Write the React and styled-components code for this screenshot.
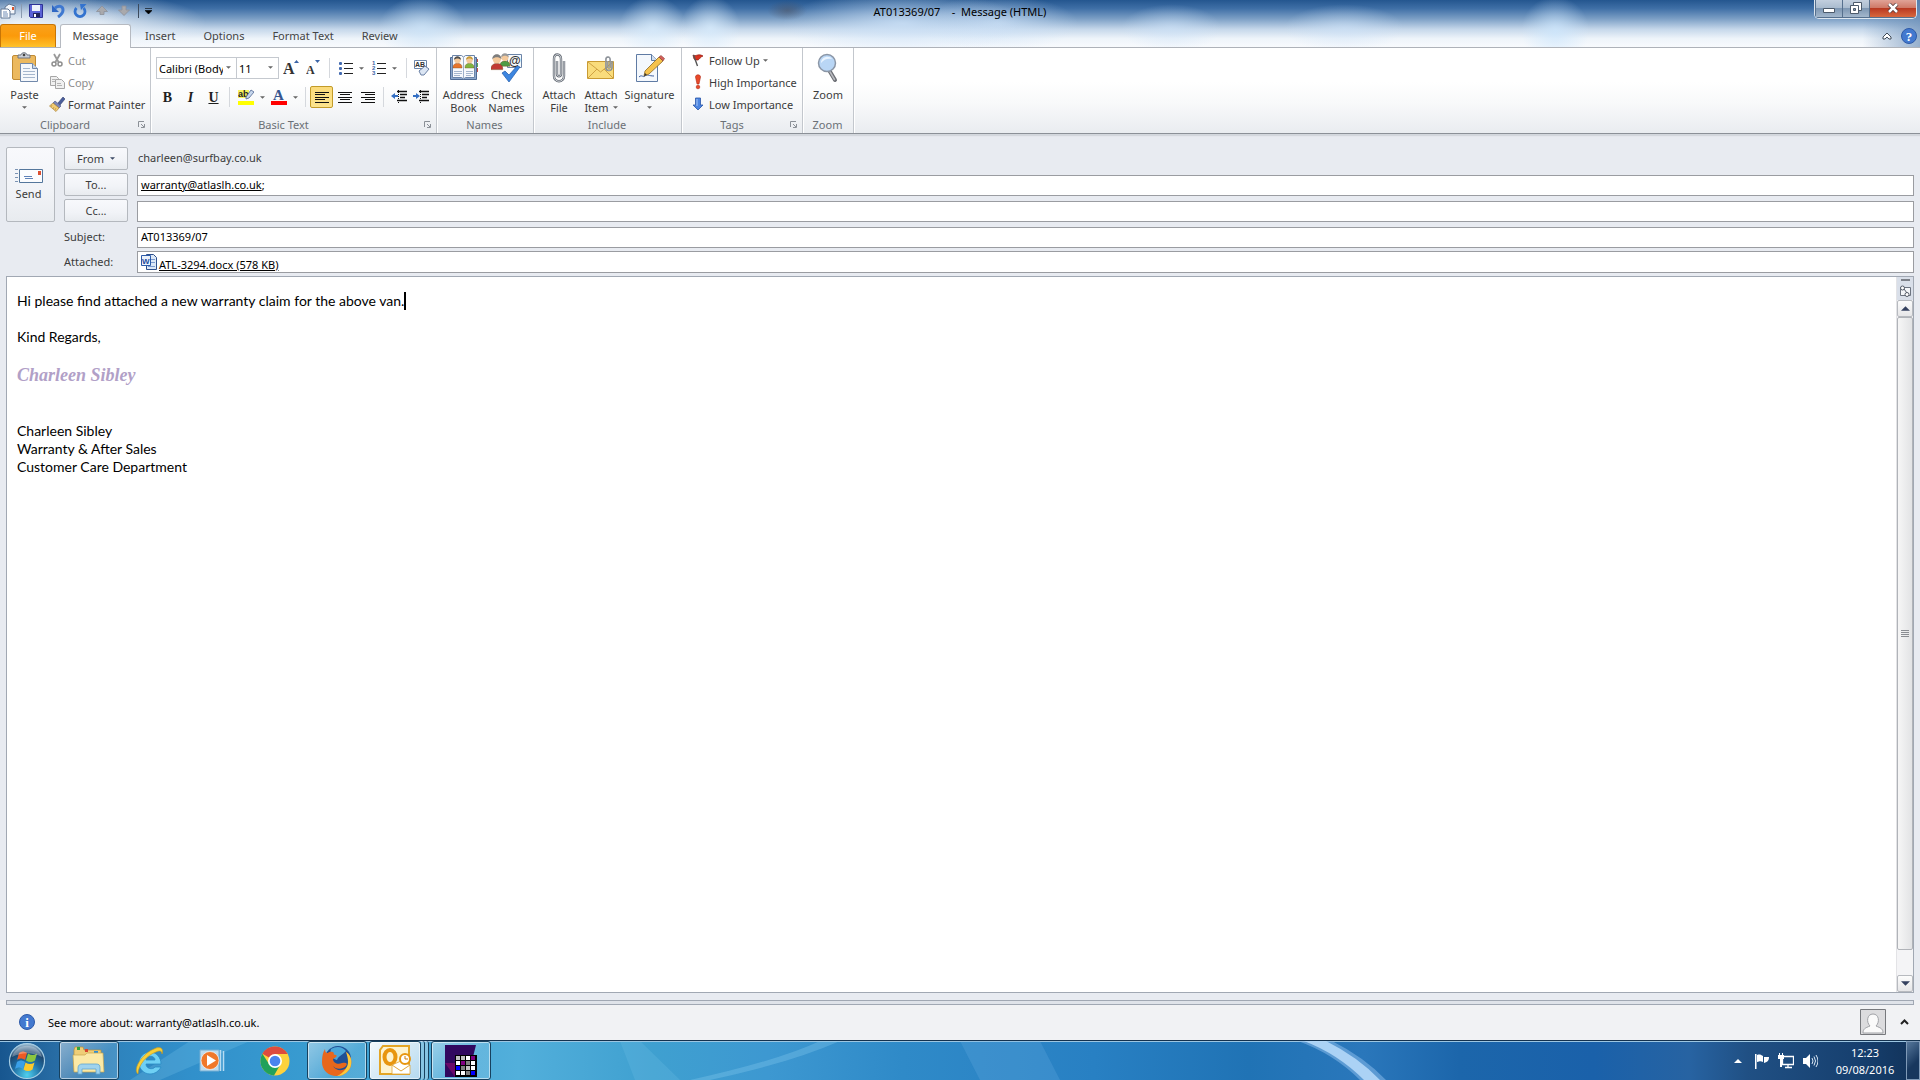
import styled, { createGlobalStyle, css } from "styled-components";

const GlobalStyle = createGlobalStyle`
    * {
        box-sizing: border-box;
    }
    body {
        margin: 0;
        font-family: "Noto Sans", "Open Sans", sans-serif;
        font-size: 11px;
        line-height: 13px;
        color: #3b3b3b;
    }
    button, input, select {
        font: inherit;
        color: inherit;
        margin: 0;
        padding: 0;
        border: none;
        background: none;
    }
    svg {
        display: block;
        flex: none;
    }
`

const Page = styled.div`
    min-height: 100vh;
    display: flex;
    flex-direction: column;
    background-color: #e8ebf1;
`

/* ---------- title bar and tabs ---------- */

const Glass = styled.header`
    height: 48px;
    display: flex;
    flex-direction: column;
    border-bottom: 1px solid #aeb2b9;
    background:
        radial-gradient(ellipse 110px 34px at 1% 50%, rgba(244, 248, 252, 0.9), transparent),
        radial-gradient(ellipse 110px 30px at 5% 50%, rgba(238, 244, 250, 0.8), transparent),
        radial-gradient(ellipse 44px 32px at 22% 60%, rgba(205, 228, 248, 0.8), transparent),
        radial-gradient(ellipse 34px 32px at 34% 60%, rgba(215, 235, 252, 0.8), transparent),
        radial-gradient(ellipse 30px 32px at 37% 60%, rgba(215, 235, 252, 0.8), transparent),
        radial-gradient(ellipse 20px 10px at 41% 22%, rgba(80, 80, 90, 0.5), transparent),
        radial-gradient(ellipse 120px 34px at 47% 50%, rgba(205, 226, 248, 0.8), transparent),
        radial-gradient(ellipse 80px 28px at 52% 50%, rgba(205, 226, 248, 0.7), transparent),
        radial-gradient(ellipse 50px 24px at 61% 60%, rgba(205, 226, 248, 0.6), transparent),
        radial-gradient(ellipse 60px 24px at 70% 60%, rgba(205, 226, 248, 0.6), transparent),
        radial-gradient(ellipse 34px 34px at 81% 65%, rgba(205, 230, 252, 0.8), transparent),
        linear-gradient(to right, transparent 97%, rgba(110, 145, 185, 0.7) 100%),
        linear-gradient(to bottom, #24568f 0%, #3f6fa6 18%, #7c9fc5 40%, #c5d7ea 62%, #eef4fa 82%, #f8fafd 100%);
`
const TitleBar = styled.div`
    height: 24px;
    display: grid;
    grid-template-columns: 1fr auto 1fr;
    align-items: start;
`
const QuickAccess = styled.div`
    display: flex;
    align-items: center;
    gap: 6px;
    height: 22px;
    padding-left: 1px;
`
const ToolButton = styled.button`
    display: flex;
    align-items: center;
    justify-content: center;
    width: ${props => props.$width || 16}px;
    height: 20px;
`
const QuickSeparator = styled.span`
    width: 1px;
    height: 14px;
    background-color: ${props => props.$dark ? "#3c4a5c" : "#8a9bb0"};
`
const Title = styled.h1`
    margin: 0;
    padding-top: 5px;
    font-size: 11px;
    font-weight: 400;
    color: #000;
    white-space: pre;
`
const WindowButtons = styled.div`
    justify-self: end;
    display: flex;
    height: 19px;
    margin-right: 3px;
    border: 1px solid #dde6ef;
    border-top: none;
    border-radius: 0 0 5px 5px;
    overflow: hidden;
`
const WindowButton = styled.button`
    width: ${props => props.$close ? 47 : 27}px;
    display: flex;
    align-items: center;
    justify-content: center;
    padding-bottom: 2px;
    border-left: 1px solid #56708e;
    border-bottom: 1px solid #56708e;
    background: ${props => props.$close
        ? "linear-gradient(#e0a397, #cf7a68 45%, #b93a22 50%, #d8683e)"
        : "linear-gradient(#c2cfde, #aabccf 45%, #7e97b3 50%, #a3b7cc)"};
`
const Tabs = styled.nav`
    flex: 1;
    display: flex;
    align-items: stretch;
`
const tabBase = css`
    height: 23px;
    padding-bottom: 1px;
    color: #444;
`
const FileTab = styled.button`
    ${tabBase}
    width: 56px;
    margin-right: 4px;
    color: #fff;
    border: 1px solid #c77506;
    border-bottom: none;
    border-radius: 3px 3px 0 0;
    background: linear-gradient(#f9a11c, #fb9a0a 50%, #fec22c);
`
const Tab = styled.button`
    ${tabBase}
    padding-left: 14px;
    padding-right: 14px;
`
const ActiveTab = styled(Tab)`
    width: 71px;
    height: 24px;
    padding: 0 0 2px;
    border: 1px solid #b6bac1;
    border-bottom: none;
    border-radius: 3px 3px 0 0;
    background-color: #fff;
    margin-bottom: -1px;
    z-index: 1;
`
const HelpArea = styled.div`
    margin-left: auto;
    display: flex;
    align-items: center;
    gap: 6px;
    padding-right: 3px;
`

/* ---------- ribbon ---------- */

const Ribbon = styled.section`
    display: flex;
    height: 86px;
    border-bottom: 1px solid #8b9097;
    box-shadow: 0 2px 1px #d3d7dd;
    background: linear-gradient(#fff 40%, #f8f9fa 65%, #e9ecf0);
`
const Group = styled.div`
    width: ${props => props.$width}px;
    display: flex;
    flex-direction: column;
    border-right: 1px solid #c3c7cd;
    box-shadow: 1px 0 0 #fff;
`
const GroupBody = styled.div`
    flex: 1;
    display: flex;
    padding: 0 ${props => props.$pad || 0}px;
`
const GroupFooter = styled.div`
    display: flex;
    align-items: center;
    gap: 12px;
    height: 17px;
    padding: 0 5px 1px 4px;
    color: #6b7076;
`
const GroupName = styled.span`
    flex: 1;
    text-align: center;
`
const BigButton = styled.button`
    width: ${props => props.$width}px;
    display: flex;
    flex-direction: column;
    align-items: center;
    padding-top: 4px;
    white-space: nowrap;
    > svg {
        height: 32px;
    }
`
const BigLabel = styled.span`
    margin-top: 4px;
    line-height: 13px;
`
const LabelLine = styled.span`
    display: flex;
    align-items: center;
    justify-content: center;
    gap: 4px;
    height: 13px;
`
const SmallStack = styled.div`
    display: flex;
    flex-direction: column;
    padding-top: 1px;
`
const SmallButton = styled.button`
    display: flex;
    align-items: center;
    gap: 3px;
    height: 22px;
    white-space: nowrap;
    color: ${props => props.$off ? "#8d8d8d" : "#3b3b3b"};
`
const FormatRows = styled.div`
    flex: 1;
    display: flex;
    flex-direction: column;
    gap: 7px;
    padding-top: 9px;
`
const FormatRow = styled.div`
    display: flex;
    align-items: center;
    height: 22px;
`
const SelectBox = styled.span`
    position: relative;
    width: ${props => props.$width}px;
    height: 22px;
    margin-right: -1px;
    border: 1px solid #c5c9cf;
    background-color: #fff;
    svg {
        position: absolute;
        right: 5px;
        top: 8px;
        pointer-events: none;
    }
`
const Select = styled.select`
    appearance: none;
    width: 100%;
    height: 20px;
    padding: 0 13px 0 2px;
    color: #000;
`
const Divider = styled.span`
    width: 1px;
    height: 20px;
    margin: 0 ${props => props.$gap || 5}px;
    background-color: #d5d8dd;
`
const FormatButton = styled.button`
    width: ${props => props.$width || 23}px;
    height: 22px;
    display: flex;
    align-items: center;
    justify-content: center;
    gap: 6px;
    font-family: "Liberation Serif", serif;
    font-size: 14px;
    font-weight: 700;
    color: #1e1e1e;
    font-style: ${props => props.$italic ? "italic" : "normal"};
    text-decoration: ${props => props.$underline ? "underline" : "none"};
    ${props => props.$pressed && css`
        border: 1px solid #c29b29;
        border-radius: 2px;
        background: linear-gradient(#fbdb7a, #fce48e);
    `}
`

/* ---------- address fields ---------- */

const Envelope = styled.form`
    display: grid;
    grid-template-columns: 49px 64px 1fr;
    grid-template-rows: repeat(4, 23px) 22px;
    column-gap: 9px;
    row-gap: 3px;
    padding: 13px 6px 3px;
`
const plate = css`
    border: 1px solid #b4b8be;
    border-radius: 2px;
    background: linear-gradient(#f8f9fc, #f1f3f7 60%, #e8ebef);
`
const SendButton = styled.button`
    ${plate}
    grid-row: 1 / span 3;
    display: flex;
    flex-direction: column;
    align-items: center;
    justify-content: center;
    gap: 3px;
    padding-right: 4px;
`
const FieldButton = styled.button`
    ${plate}
    display: flex;
    align-items: center;
    justify-content: center;
    gap: 6px;
`
const FieldLabel = styled.label`
    grid-column: 2;
    align-self: center;
    padding-bottom: 1px;
`
const FromValue = styled.output`
    align-self: center;
    padding: 0 1px 2px;
`
const fieldBox = css`
    height: 21px;
    align-self: end;
    padding: 0 3px 2px;
    border: 1px solid #9a9ca1;
    background-color: #fff;
    color: #000;
`
const FieldInput = styled.input`
    ${fieldBox}
    width: 100%;
`
const FieldBox = styled.div`
    ${fieldBox}
    display: flex;
    align-items: center;
    a {
        color: #000;
    }
    input {
        flex: 1;
    }
`
const AttachBox = styled(FieldBox)`
    height: 22px;
    padding-bottom: 0;
    gap: 2px;
    a {
        padding-top: 4px;
    }
`

/* ---------- message ---------- */

const Message = styled.main`
    flex: 1;
    display: flex;
    margin: 0 6px;
    border: 1px solid #a1a8b3;
    background-color: #fff;
`
const Letter = styled.div`
    flex: 1;
    padding: 15px 10px;
    outline: none;
    font-family: Lato, sans-serif;
    font-size: 14px;
    line-height: 18px;
    color: #000;
    p {
        margin: 0 0 18px;
    }
`
const Caret = styled.span`
    display: inline-block;
    width: 2px;
    height: 18px;
    vertical-align: top;
    background-color: #000;
`
const Signature = styled.p`
    padding: 2px 0 20px;
    font-family: "Liberation Serif", serif;
    font-size: 18px;
    font-style: italic;
    font-weight: 700;
    color: #b1a0c7;
`
const ScrollBar = styled.div`
    width: 17px;
    display: flex;
    flex-direction: column;
    border-left: 1px solid #e3e3e6;
    background-color: #f4f4f6;
`
const ScrollTools = styled.div`
    height: 23px;
    display: flex;
    flex-direction: column;
    align-items: center;
    gap: 4px;
    padding-top: 2px;
    background-color: #d9dfe9;
`
const ScrollButton = styled.button`
    height: 17px;
    display: flex;
    align-items: center;
    justify-content: center;
    border: 1px solid #b7babf;
    border-radius: 2px;
    background: linear-gradient(#fcfcfc, #e6e6e8);
`
const ScrollTrack = styled.div`
    flex: 1;
    display: flex;
    padding-bottom: 25px;
`
const ScrollThumb = styled.div`
    flex: 1;
    display: flex;
    align-items: center;
    justify-content: center;
    border: 1px solid #b0b3b8;
    border-radius: 2px;
    background: linear-gradient(to right, #f6f6f6, #e2e3e5);
`

/* ---------- people pane ---------- */

const People = styled.footer`
    margin-top: 7px;
    height: 40px;
    display: flex;
    flex-direction: column;
    background-color: #f1f2f4;
`
const Splitter = styled.div`
    height: 5px;
    margin: 0 6px;
    border: 1px solid #a1a8b3;
    background-color: #dfe3e9;
`
const PeopleRow = styled.div`
    flex: 1;
    display: flex;
    align-items: center;
    gap: 13px;
    padding: 0 10px 1px 19px;
    color: #000;
`
const PeopleEnd = styled.div`
    margin-left: auto;
    display: flex;
    align-items: center;
    gap: 12px;
`

/* ---------- taskbar ---------- */

const Taskbar = styled.div`
    position: relative;
    height: 40px;
    display: flex;
    overflow: hidden;
    border-top: 1px solid #14324f;
    box-shadow: inset 0 1px 0 #9cc6e2;
    background: linear-gradient(to right, #17568f 0, #286da5 3%, #2e83bd 6%, #3190cb 10%, #3b9fd2 18%, #52afdb 27%,
        #3fa0d0 34%, #3d98d1 40%, #2f8ac8 47%, #2880c3 57%, #2073b5 65%, #2a77bb 71%, #1c66ab 76%, #1a61aa 83%,
        #2763a2 88%, #205084 91%, #163f6e 97%, #123258 100%);
`
const Streaks = styled.svg`
    position: absolute;
    left: 0;
    top: 0;
    width: 100%;
    height: 100%;
`
const TaskButton = styled.button`
    position: relative;
    width: ${props => props.$width}px;
    height: 39px;
    display: flex;
    align-items: center;
    justify-content: center;
    margin-right: ${props => props.$after || 0}px;
    ${props => props.$open && css`
        border: 1px solid #17415f;
        border-radius: 3px;
        box-shadow: inset 0 0 0 1px rgba(255, 255, 255, 0.55);
        background: linear-gradient(135deg, rgba(255, 255, 255, 0.45), rgba(255, 255, 255, 0.12) 60%);
    `}
    ${props => props.$active && css`
        background: linear-gradient(135deg, #f4f9fc, #b4d9ef);
    `}
`
const StackEdge = styled.span`
    position: relative;
    width: 4px;
    height: 39px;
    border-right: 1px solid #17415f;
    border-radius: 0 3px 3px 0;
    background-color: rgba(255, 255, 255, 0.35);
    margin-right: ${props => props.$after || 0}px;
`
const Tray = styled.div`
    position: relative;
    margin-left: auto;
    display: flex;
    align-items: center;
    gap: 8px;
    color: #fff;
`
const Clock = styled.time`
    width: 66px;
    margin-left: 6px;
    text-align: center;
    line-height: 17px;
`
const ShowDesktop = styled.button`
    width: 14px;
    height: 39px;
    border: 1px solid #7f9ab8;
    background: linear-gradient(135deg, #56779b, #17375e 60%);
`

/* ---------- icons ---------- */

const Icon = ({ w = 16, h = w, box, children }) => (
    <svg width={w} height={h} viewBox={box || `0 0 ${w} ${h}`} aria-hidden="true">{children}</svg>
)

const Arrow = ({ color = "#666", w = 5, up }) => (
    <Icon w={w} h={Math.ceil(w / 2)} box="0 0 6 3"><path d={up ? "M0 3h6L3 0z" : "M0 0h6L3 3z"} fill={color} /></Icon>
)

const Launcher = () => (
    <Icon w={7}>
        <path d="M.5 6V.5H6" fill="none" stroke="#8b9097" />
        <path d="M3 3l3 3M6.500 3v3.500H3" fill="none" stroke="#8b9097" />
    </Icon>
)

const MailIcon = () => (
    <Icon w={16}>
        <path d="M5 4l4-3 6 2v8H5z" fill="#f4f7fb" stroke="#607694" />
        <path d="M1 6h7l2 2v7H1z" fill="#fff" stroke="#607694" />
        <path d="M3 9h4M3 11h5M3 13h5" stroke="#6e8bb4" />
        <path d="M12 4h2v3h-2z" fill="#d8542c" />
    </Icon>
)

const SaveIcon = () => (
    <Icon w={14}>
        <path d="M.5.5h13v13h-12l-1-1z" fill="#5a62d6" stroke="#2d3295" />
        <path d="M3 1h8v6H3z" fill="#eef2fb" />
        <path d="M4 9h7v4H4z" fill="#20255e" />
        <path d="M5 10h2v3H5z" fill="#fff" />
    </Icon>
)

const UndoIcon = () => (
    <Icon w={14}>
        <path d="M4 4c4-3 8-2 8 2 0 3-2 5-5 7" fill="none" stroke="#3f78d0" strokeWidth="3" />
        <path d="M1 1v7h7z" fill="#2f67c4" />
    </Icon>
)

const RedoIcon = () => (
    <Icon w={14}>
        <path d="M3.500 4a5 5 0 1 0 7 0" fill="none" stroke="#3373cf" strokeWidth="2.800" />
        <path d="M7 0h6.500L8 6z" fill="#3373cf" />
    </Icon>
)

const StepIcon = ({ down }) => (
    <Icon w={12}>
        <path d={down ? "M4 1h4v4h3.500L6 10.500.5 5H4z" : "M6 1l5.500 5.500H8v3H4v-3H.5z"} fill="#a9a9ac" stroke="#8d9199" strokeWidth=".8" />
    </Icon>
)

const PasteIcon = () => (
    <Icon w={28} h={32}>
        <rect x="1.500" y="3.500" width="23" height="24" rx="1.500" fill="#ecb95f" stroke="#c08b35" />
        <path d="M7 6V3h3c0-3 6-3 6 0h3v3z" fill="#c9ced6" stroke="#6e7580" />
        <circle cx="13" cy="3" r="1.300" fill="#444" />
        <path d="M9.500 11.500h12l5 5v13h-17z" fill="#f5f8fc" stroke="#7189ab" />
        <path d="M21.500 11.500v5h5" fill="#cad7e8" stroke="#7189ab" />
        <path d="M12 16.500h7M12 19.500h12M12 22.500h12M12 25.500h12" stroke="#a5b6cd" />
    </Icon>
)

const CutIcon = () => (
    <Icon w={16}>
        <path d="M5 2l4.500 8M11 2L6.500 10" stroke="#9a9a9a" strokeWidth="1.800" />
        <circle cx="5" cy="12" r="2" fill="none" stroke="#8e8e8e" strokeWidth="1.500" />
        <circle cx="11" cy="12" r="2" fill="none" stroke="#8e8e8e" strokeWidth="1.500" />
    </Icon>
)

const CopyIcon = () => (
    <Icon w={16}>
        <path d="M1.500 2.500h6l2 2v7h-8z" fill="#f0f0f0" stroke="#a6a6a6" />
        <path d="M6.500 5.500h6l3 3v6h-9z" fill="#f0f0f0" stroke="#a6a6a6" />
        <path d="M3 5.500h3M3 7.500h3M8 9.500h4M8 11.500h5" stroke="#b4b4b4" />
    </Icon>
)

const PainterIcon = () => (
    <Icon w={16}>
        <path d="M9 7l5-6 2 2-5 6z" fill="#4b5f9c" stroke="#2f3c6b" strokeWidth=".6" />
        <path d="M6 5l6 5-2 2-6-5z" fill="#7a86b8" stroke="#454f80" strokeWidth=".6" />
        <path d="M4 7l6 5-3 3.500L.5 10z" fill="#f2cd74" stroke="#a9823a" strokeWidth=".7" />
        <path d="M3 9l-1 2M5 11l-1 2M7 12l-1 2" stroke="#b98f3c" strokeWidth=".7" />
    </Icon>
)

const SizeIcon = ({ big }) => (
    <Icon w={16}>
        <text x="0" y="14" fontFamily="Liberation Serif, serif" fontWeight="700" fontSize={big ? 16 : 12} fill="#333">A</text>
        <path d={big ? "M11 3h5l-2.500-3z" : "M9 0h5l-2.500 3z"} fill="#3b64a6" />
    </Icon>
)

const ListIcon = ({ numbers }) => (
    <Icon w={14} h={14}>
        {[1, 6, 11].map((y, i) => numbers
            ? <text key={y} x="0" y={y + 3} fontSize="6" fontWeight="700" fill="#3b64a6" fontFamily="Liberation Sans, sans-serif">{i + 1}</text>
            : <rect key={y} x="0" y={y} width="3" height="3" rx="1" fill="#4169b0" />)}
        <path d="M5 2.500h9M5 7.500h9M5 12.500h9" stroke="#222" />
    </Icon>
)

const ClearIcon = () => (
    <Icon w={18} h={16}>
        <path d="M1.500.5h12v8h-12z" fill="#fff" stroke="#6b84a8" />
        <text x="2" y="7" fontSize="7" fontWeight="700" fill="#333" fontFamily="Liberation Sans, sans-serif">AB</text>
        <path d="M6 11l6-5 4 3-5 6H8z" fill="#dbe5f3" stroke="#6a80a5" />
    </Icon>
)

const HighlightIcon = () => (
    <Icon w={16}>
        <path d="M0 1h11v8H0z" fill="#f8f35c" />
        <text x="0" y="8" fontSize="9" fontFamily="Liberation Sans, sans-serif" fill="#222">ab</text>
        <path d="M8 8l5-7 3 2-5 6-3 1z" fill="#c6d6ec" stroke="#4f6692" strokeWidth=".8" />
        <path d="M0 12h16v4H0z" fill="#ff0" />
    </Icon>
)

const FontColorIcon = () => (
    <Icon w={16}>
        <text x="2" y="11" fontSize="15" fontWeight="700" fontFamily="Liberation Serif, serif" fill="#35558f">A</text>
        <path d="M0 12h16v4H0z" fill="#f00" />
    </Icon>
)

const AlignIcon = ({ at }) => (
    <Icon w={14} h={11}>
        {[14, 10, 14, 10, 14].map((len, i) => (
            <rect key={i} x={at === "left" ? 0 : at === "right" ? 14 - len : (14 - len) / 2} y={[0, 2, 5, 7, 10][i]} width={len} height="1" fill="#111" />
        ))}
    </Icon>
)

const IndentIcon = ({ out }) => (
    <Icon w={16} h={14}>
        <path d="M6 1.500h10M9 4.500h7M9 7.500h5M6 10.500h10" stroke="#111" strokeWidth="1.300" />
        <path d="M7.500 0v14" stroke="#111" strokeDasharray="1 1" />
        <path d={out ? "M0 6l4-3v2h3v2H4v2z" : "M7 6L3 3v2H0v2h3v2z"} fill="#3570c4" />
    </Icon>
)

const Person = ({ x, y, color, head = "#7a4c30" }) => (
    <g transform={`translate(${x} ${y})`}>
        <path d="M0 11c0-5 9-5 9 0v1H0z" fill={color} stroke="#7b4b26" strokeWidth=".4" />
        <circle cx="4.500" cy="4" r="3.200" fill="#f4c99b" />
        <path d="M1 4c0-5 7-5 7 0-2-2-5-2-7 0z" fill={head} />
    </g>
)

const AddressBookIcon = () => (
    <Icon w={32} h={30}>
        <path d="M2.500 4.500h26v22h-26z" fill="#8ba6cb" stroke="#4f6b94" />
        <path d="M29 6h1v3h-1zM29 15h1v4h-1z" fill="#c9504b" />
        <path d="M29 10h1v4h-1z" fill="#5fa34f" />
        <path d="M4.500 2.500h9l2 1.500 2-1.500h9v22h-9l-2 1.500-2-1.500h-9z" fill="#f7f9fc" stroke="#6b84a8" />
        <path d="M15.500 4v22" stroke="#9db0ca" />
        <Person x={5} y={3} color="#e8742a" head="#4e4e4e" />
        <Person x={17} y={3} color="#7fb53f" head="#c69a37" />
        <path d="M6 18.500h8M6 20.500h8M6 22.500h6M18 18.500h7M18 20.500h7M18 22.500h5" stroke="#a5b6cd" />
    </Icon>
)

const CheckNamesIcon = () => (
    <Icon w={32} h={30}>
        <path d="M16.500 1.500h14v13h-14z" fill="#f7f9fc" stroke="#6b84a8" />
        <text x="18" y="12" fontSize="12" fontWeight="700" fontFamily="Liberation Sans, sans-serif" fill="#333">@</text>
        <g transform="translate(9 0) scale(1.100)"><Person x={0} y={0} color="#4d9c45" head="#999" /></g>
        <g transform="translate(0 1) scale(1.300)"><Person x={0} y={0} color="#c23a34" head="#7d7d7d" /></g>
        <path d="M11 20l3-2 4 4 8-9 3 1-11 15z" fill="#3d86e0" stroke="#215aab" strokeWidth=".7" />
    </Icon>
)

const ClipPath = ({ d }) => (
    <g fill="none">
        <path d={d} stroke="#666c75" strokeWidth="2.400" />
        <path d={d} stroke="#e9ecf0" strokeWidth=".8" />
    </g>
)

const ClipIcon = () => (
    <Icon w={16} h={30}>
        <ClipPath d="M6 8v13c0 3 4 3 4 0V6c0-6-7-6-7 0v17c0 7 10 7 10 0V8" />
    </Icon>
)

const AttachItemIcon = () => (
    <Icon w={30}>
        <path d="M1.500 8.500h26v17h-26z" fill="#f9dc7c" stroke="#c99b34" />
        <path d="M2 9l12.500 10L27 9M2 25l9-9M27 25l-9-9" fill="none" stroke="#cfa243" />
        <g transform="translate(18 3) scale(.62)"><ClipPath d="M6 8v9c0 3 4 3 4 0V6c0-6-7-6-7 0v12c0 7 10 7 10 0V8" /></g>
    </Icon>
)

const SignatureIcon = () => (
    <Icon w={30}>
        <path d="M1.500 1.500h15l6 6v21h-21z" fill="#f4f8fd" stroke="#5f7ba4" />
        <path d="M16.500 1.500v6h6" fill="#d2deee" stroke="#5f7ba4" />
        <path d="M4 24c3-3 4 1 6-1s4 0 9 0" fill="none" stroke="#3d5fa0" />
        <path d="M10 18L24 4l4 4-14 13-5 2z" fill="#f5c24c" stroke="#8b6a26" strokeWidth=".8" />
        <path d="M24 4l2-1.500 3.500 3L28 8z" fill="#d4605a" stroke="#8a3a36" strokeWidth=".6" />
        <path d="M9 23l1-3 2 2z" fill="#333" />
    </Icon>
)

const FlagIcon = () => (
    <Icon w={16}>
        <path d="M3 3c3 2 5-2 10 1-3 1-3 3-5 4-2 0-3 0-4-1z" fill="#d9321f" stroke="#8f1d12" strokeWidth=".7" />
        <path d="M3.500 3l4 11" stroke="#555" strokeWidth="1.400" />
    </Icon>
)

const HighIcon = () => (
    <Icon w={16}>
        <path d="M5.500 3c0-3 5-3 5 0L9 10H7z" fill="#e8492a" stroke="#b02a14" strokeWidth=".6" />
        <circle cx="8" cy="13" r="1.800" fill="#e8492a" stroke="#b02a14" strokeWidth=".6" />
    </Icon>
)

const LowIcon = () => (
    <Icon w={16}>
        <path d="M5.500 2h5v7h2.500L8 14 3 9h2.500z" fill="#4b84e0" stroke="#2a55a8" strokeWidth=".8" />
        <path d="M7 3v7" stroke="#a8c6f5" />
    </Icon>
)

const ZoomIcon = () => (
    <Icon w={22} h={30}>
        <path d="M12 17l6 10" stroke="#6d6f75" strokeWidth="4" strokeLinecap="round" />
        <path d="M12.500 18l5 8.500" stroke="#b9bbc0" strokeWidth="1.500" strokeLinecap="round" />
        <circle cx="10" cy="10" r="8.500" fill="#b9d6f5" stroke="#8b96a6" strokeWidth="1.500" />
        <path d="M4 10c0-7 9-8 11-4-4-1-8 0-11 4z" fill="#e9f4ff" />
    </Icon>
)

const SendIcon = () => (
    <Icon w={30} h={15}>
        <path d="M5.500.5h23v13h-23z" fill="#fbfcfe" stroke="#54779c" />
        <path d="M1 .5h3M1 4.500h3M1 8.500h3M1 12.500h3" stroke="#7b93b3" />
        <path d="M24 2h3v4h-3z" fill="#dc4f31" />
        <path d="M10 7.500h8M11 9.500h8" stroke="#5f82b8" />
    </Icon>
)

const WordIcon = () => (
    <Icon w={16}>
        <path d="M5.500.5h7l3 3v12h-10z" fill="#dce8f7" stroke="#2c4f8c" />
        <path d="M10 5.500h4M10 8.500h4M7 12.500h7" stroke="#7b9bd0" />
        <path d="M.5 1.500h9v10h-9z" fill="#eaf1fb" stroke="#2c5aa8" />
        <text x="1" y="9.500" fontSize="8" fontWeight="700" fontFamily="Liberation Sans, sans-serif" fill="#1d4c9e">W</text>
    </Icon>
)

const HelpIcon = ({ sign }) => (
    <Icon w={16}>
        <circle cx="8" cy="8" r="7.500" fill="#4379cf" stroke="#2d5aa8" />
        <text x="8" y="12.500" textAnchor="middle" fontSize="13" fontWeight="700" fontFamily="Liberation Serif, serif" fill="#fff">{sign}</text>
    </Icon>
)

const StartIcon = () => (
    <Icon w={38}>
        <defs>
            <radialGradient id="orb" cx=".5" cy=".9" r=".9">
                <stop offset="0" stopColor="#4fd0ee" />
                <stop offset=".45" stopColor="#1f6fa5" />
                <stop offset=".75" stopColor="#1c456d" />
                <stop offset="1" stopColor="#a9c8dc" />
            </radialGradient>
        </defs>
        <circle cx="19" cy="19" r="17.500" fill="url(#orb)" stroke="#a8cfe5" strokeWidth="1.200" />
        <path d="M11 11c3-2 5-2 8 0l-2 7c-3-2-5-2-8 0z" fill="#ee5a24" />
        <path d="M20 11.500c3 2 6 2 9 0l-2 7c-3 2-6 2-9 0z" fill="#8cc63f" />
        <path d="M9 20c3-2 5-2 8 0l-2 7c-3-2-5-2-8 0z" fill="#3aa0e8" />
        <path d="M17.500 20.500c3 2 6 2 9 0l-2 7c-3 2-6 2-9 0z" fill="#fbc92c" />
        <path d="M4 15C8 0 30 0 34 15 24 10 14 10 4 15z" fill="#fff" opacity=".3" />
    </Icon>
)

const FolderIcon = () => (
    <Icon w={34} h={32}>
        <path d="M2 5l1-3h8l1 3h17v20H2z" fill="#efce77" stroke="#b8913b" strokeWidth=".7" />
        <path d="M5 2h3v3H5z" fill="#2fa53c" />
        <path d="M13 4h3v3h-3z" fill="#d9452c" />
        <path d="M22 6h4v2h-4z" fill="#2c8fd9" />
        <path d="M1 10h12l2-2h16l1 19H2z" fill="#fbe9a6" stroke="#c9a64f" strokeWidth=".7" />
        <path d="M6 29v-6c0-3 2-4 4-4h14c3 0 4 1 4 4v6h-4v-5H10v5z" fill="#9fd3ee" stroke="#5fa5cf" strokeWidth=".8" />
    </Icon>
)

const ExplorerIcon = () => (
    <Icon w={32}>
        <path d="M27 22c-2 4-6 7-11 7-6 0-11-5-11-11S10 7 16 7s11 5 11 12H12c0 5 7 6 9 3zM12 15h9c0-5-9-5-9 0z" fill="#6fd0f4" stroke="#2a8ac4" strokeWidth=".8" fillRule="evenodd" />
        <path d="M4 29C-2 24 9 8 20 4c6-3 10-1 8 5 0-3-2-4-6-2C13 10 4 20 4 29z" fill="#f7cf3a" stroke="#c99718" strokeWidth=".6" />
    </Icon>
)

const MediaIcon = () => (
    <Icon w={28} h={26}>
        <path d="M2 2h19v21H2z" fill="#bcdcf0" stroke="#75aed2" />
        <path d="M22.500 2v21M25.500 3v20" stroke="#b7dcf2" strokeWidth="1.500" />
        <circle cx="12" cy="12.500" r="9" fill="#f0782a" stroke="#fff" strokeWidth=".6" />
        <path d="M9 7l9 5.500L9 18z" fill="#fff" />
    </Icon>
)

const ChromeIcon = () => (
    <Icon w={30}>
        <circle cx="15" cy="15" r="14.500" fill="#fdd23c" />
        <path d="M15 15L2.400 7.700A14.500 14.500 0 0 1 27.600 8H15z" fill="#dd4b3e" />
        <path d="M2.400 7.700A14.500 14.500 0 0 0 14 29.500l6.500-11.300L15 15 9 18z" fill="#21a15a" />
        <path d="M27.600 8H15v8l5.500 2.500z" fill="#fdd23c" />
        <circle cx="15" cy="15" r="7" fill="#fff" />
        <circle cx="15" cy="15" r="5.300" fill="#4a83ee" />
    </Icon>
)

const FirefoxIcon = () => (
    <Icon w={32}>
        <circle cx="17" cy="14" r="13" fill="#1f4f96" />
        <path d="M10 4c5-3 11-3 15 2-3 4-8 5-9 9-4-1-8-5-6-11z" fill="#4aa5d8" />
        <path d="M4 4c0 3 1 4 3 4 2-2 5-1 6 0-1 1 0 2 2 2 2 1-1 3-3 4 0 4 5 6 9 4 4-1 6 0 4 3-4 4-11 3-13 0 3 6 14 6 16-3 1-4-1-8-3-11 5 3 6 9 5 13-1 6-7 11-14 11C7 31 1 25 1 17 1 11 2 7 4 4z" fill="#e8671c" />
        <path d="M25 7c5 3 6 9 5 13-1 6-7 11-14 11 7-3 11-9 11-14 0-4-1-7-2-10z" fill="#fbc73a" />
    </Icon>
)

const OutlookIcon = () => (
    <Icon w={32}>
        <path d="M4 1h26v28H1V5z" fill="#fdf3cf" stroke="#e3a526" strokeWidth="2" />
        <ellipse cx="11" cy="12" rx="5.500" ry="7" fill="none" stroke="#e8960f" strokeWidth="4" />
        <path d="M13 20l9-4 9 4v9H13z" fill="#fff" stroke="#e0a63a" strokeWidth=".8" />
        <path d="M13 20l9 6 9-6" fill="none" stroke="#e0a63a" />
        <circle cx="26" cy="14" r="5" fill="#fff" stroke="#e8960f" strokeWidth="2" />
        <path d="M26 11v3h3" fill="none" stroke="#c97b0a" />
    </Icon>
)

const cells = ["#c0c0c0", "#c0c0c0", "#fff", "#800080", "#fff", "#800080", "#808080", "#fff", "#00f", "#808080", "#c0c0c0", "#fff", "#fff", "#fff", "#808080", "#00f"]

const GridIcon = () => (
    <Icon w={32}>
        <path d="M0 0h31l-3 12L10 32H0z" fill="#31085f" />
        <path d="M0 18h10v14z" fill="#6a0a6a" />
        <path d="M10 10h22v22H10z" fill="#000" />
        {cells.map((fill, i) => (
            <rect key={i} x={11 + (i % 4) * 5} y={11 + Math.floor(i / 4) * 5} width="4" height="4" fill={fill} />
        ))}
    </Icon>
)

const PersonIcon = () => (
    <Icon w={26}>
        <path d="M.5.5h25v25H.5z" fill="#dcdcde" stroke="#77797d" />
        <path d="M3 24c0-4 2-5 7-7-4-4-3-12 3-12s7 8 3 12c5 2 7 3 7 7z" fill="#fafafa" stroke="#a0a2a6" />
    </Icon>
)

const Chevron = ({ color }) => (
    <Icon w={9} h={7}>
        <path d="M1 5l3.500-3.500L8 5" fill="none" stroke={color} strokeWidth="2" />
    </Icon>
)

const App = () => {
    return (
        <Page>
            <GlobalStyle />
            <Glass>
                <TitleBar>
                    <QuickAccess>
                        <ToolButton $width={14} aria-label="Message window"><MailIcon /></ToolButton>
                        <QuickSeparator />
                        <ToolButton aria-label="Save"><SaveIcon /></ToolButton>
                        <ToolButton aria-label="Undo"><UndoIcon /></ToolButton>
                        <ToolButton aria-label="Redo"><RedoIcon /></ToolButton>
                        <ToolButton aria-label="Previous item"><StepIcon /></ToolButton>
                        <ToolButton aria-label="Next item"><StepIcon down /></ToolButton>
                        <QuickSeparator $dark />
                        <ToolButton $width={7} aria-label="Customize toolbar">
                            <Icon w={7} h={6}><path d="M0 .5h7M0 2.500h7L3.500 6z" stroke="#000" fill="#000" strokeWidth=".6" /></Icon>
                        </ToolButton>
                    </QuickAccess>
                    <Title>{"AT013369/07    -  Message (HTML)"}</Title>
                    <WindowButtons>
                        <WindowButton aria-label="Minimize">
                            <Icon w={12} h={10}><path d="M.5 5.500h11v4H.5z" fill="#fff" stroke="#4c5a6b" /></Icon>
                        </WindowButton>
                        <WindowButton aria-label="Restore">
                            <Icon w={12}>
                                <path d="M3.500.5h8v8h-8z" fill="#fff" stroke="#4c5a6b" />
                                <path d="M.5 3.500h8v8h-8z" fill="#fff" stroke="#4c5a6b" />
                                <path d="M3.500 6.500h2v2h-2z" fill="#8299b3" stroke="#4c5a6b" />
                            </Icon>
                        </WindowButton>
                        <WindowButton $close aria-label="Close">
                            <Icon w={12} h={10}>
                                <path d="M2 1l8 8M10 1L2 9" stroke="#4c3030" strokeWidth="4" />
                                <path d="M2 1l8 8M10 1L2 9" stroke="#fff" strokeWidth="2.500" />
                            </Icon>
                        </WindowButton>
                    </WindowButtons>
                </TitleBar>
                <Tabs>
                    <FileTab>File</FileTab>
                    <ActiveTab>Message</ActiveTab>
                    <Tab>Insert</Tab>
                    <Tab>Options</Tab>
                    <Tab>Format Text</Tab>
                    <Tab>Review</Tab>
                    <HelpArea>
                        <ToolButton aria-label="Minimize the ribbon">
                            <Icon w={10} h={8}><path d="M1 5l4-4 4 4v2H7L5 5 3 7H1z" fill="#fff" stroke="#3f4a58" /></Icon>
                        </ToolButton>
                        <ToolButton aria-label="Help"><HelpIcon sign="?" /></ToolButton>
                    </HelpArea>
                </Tabs>
            </Glass>

            <Ribbon>
                <Group $width={151}>
                    <GroupBody>
                        <BigButton $width={49}>
                            <PasteIcon />
                            <BigLabel>
                                <LabelLine>Paste</LabelLine>
                                <LabelLine><Arrow /></LabelLine>
                            </BigLabel>
                        </BigButton>
                        <SmallStack>
                            <SmallButton $off><CutIcon />Cut</SmallButton>
                            <SmallButton $off><CopyIcon />Copy</SmallButton>
                            <SmallButton><PainterIcon />Format Painter</SmallButton>
                        </SmallStack>
                    </GroupBody>
                    <GroupFooter><GroupName>Clipboard</GroupName><Launcher /></GroupFooter>
                </Group>

                <Group $width={286}>
                    <GroupBody $pad={5}>
                        <FormatRows>
                            <FormatRow>
                                <SelectBox $width={81}>
                                    <Select aria-label="Font"><option>Calibri (Body)</option></Select>
                                    <Arrow />
                                </SelectBox>
                                <SelectBox $width={43}>
                                    <Select aria-label="Font size"><option>11</option></Select>
                                    <Arrow />
                                </SelectBox>
                                <FormatButton $width={26} aria-label="Grow font"><SizeIcon big /></FormatButton>
                                <FormatButton $width={20} aria-label="Shrink font"><SizeIcon /></FormatButton>
                                <Divider />
                                <FormatButton $width={32} aria-label="Bullets"><ListIcon /><Arrow /></FormatButton>
                                <FormatButton $width={34} aria-label="Numbering"><ListIcon numbers /><Arrow /></FormatButton>
                                <Divider />
                                <FormatButton $width={20} aria-label="Clear formatting"><ClearIcon /></FormatButton>
                            </FormatRow>
                            <FormatRow>
                                <FormatButton aria-label="Bold">B</FormatButton>
                                <FormatButton $italic aria-label="Italic">I</FormatButton>
                                <FormatButton $underline aria-label="Underline">U</FormatButton>
                                <Divider $gap={4} />
                                <FormatButton $width={34} aria-label="Highlight"><HighlightIcon /><Arrow /></FormatButton>
                                <FormatButton $width={33} aria-label="Font colour"><FontColorIcon /><Arrow /></FormatButton>
                                <Divider $gap={4} />
                                <FormatButton $pressed aria-label="Align left"><AlignIcon at="left" /></FormatButton>
                                <FormatButton aria-label="Centre"><AlignIcon /></FormatButton>
                                <FormatButton aria-label="Align right"><AlignIcon at="right" /></FormatButton>
                                <Divider $gap={4} />
                                <FormatButton $width={22} aria-label="Decrease indent"><IndentIcon out /></FormatButton>
                                <FormatButton $width={22} aria-label="Increase indent"><IndentIcon /></FormatButton>
                            </FormatRow>
                        </FormatRows>
                    </GroupBody>
                    <GroupFooter><GroupName>Basic Text</GroupName><Launcher /></GroupFooter>
                </Group>

                <Group $width={97}>
                    <GroupBody $pad={5}>
                        <BigButton $width={44}>
                            <AddressBookIcon />
                            <BigLabel><LabelLine>Address</LabelLine><LabelLine>Book</LabelLine></BigLabel>
                        </BigButton>
                        <BigButton $width={44}>
                            <CheckNamesIcon />
                            <BigLabel><LabelLine>Check</LabelLine><LabelLine>Names</LabelLine></BigLabel>
                        </BigButton>
                    </GroupBody>
                    <GroupFooter><GroupName>Names</GroupName></GroupFooter>
                </Group>

                <Group $width={148}>
                    <GroupBody $pad={4}>
                        <BigButton $width={42}>
                            <ClipIcon />
                            <BigLabel><LabelLine>Attach</LabelLine><LabelLine>File</LabelLine></BigLabel>
                        </BigButton>
                        <BigButton $width={42}>
                            <AttachItemIcon />
                            <BigLabel><LabelLine>Attach</LabelLine><LabelLine>Item<Arrow /></LabelLine></BigLabel>
                        </BigButton>
                        <BigButton $width={55}>
                            <SignatureIcon />
                            <BigLabel><LabelLine>Signature</LabelLine><LabelLine><Arrow /></LabelLine></BigLabel>
                        </BigButton>
                    </GroupBody>
                    <GroupFooter><GroupName>Include</GroupName></GroupFooter>
                </Group>

                <Group $width={121}>
                    <GroupBody $pad={8}>
                        <SmallStack>
                            <SmallButton><FlagIcon />Follow Up<Arrow /></SmallButton>
                            <SmallButton><HighIcon />High Importance</SmallButton>
                            <SmallButton><LowIcon />Low Importance</SmallButton>
                        </SmallStack>
                    </GroupBody>
                    <GroupFooter><GroupName>Tags</GroupName><Launcher /></GroupFooter>
                </Group>

                <Group $width={51}>
                    <GroupBody>
                        <BigButton $width={50}>
                            <ZoomIcon />
                            <BigLabel><LabelLine>Zoom</LabelLine></BigLabel>
                        </BigButton>
                    </GroupBody>
                    <GroupFooter><GroupName>Zoom</GroupName></GroupFooter>
                </Group>
            </Ribbon>

            <Envelope>
                <SendButton type="button"><SendIcon />Send</SendButton>
                <FieldButton type="button">From<Arrow color="#3d4a66" /></FieldButton>
                <FromValue>charleen@surfbay.co.uk</FromValue>
                <FieldButton type="button">To...</FieldButton>
                <FieldBox>
                    <span><a href="mailto:warranty@atlaslh.co.uk">warranty@atlaslh.co.uk</a>;</span>
                    <input aria-label="To" />
                </FieldBox>
                <FieldButton type="button">Cc...</FieldButton>
                <FieldInput aria-label="Cc" />
                <FieldLabel htmlFor="subject">Subject:</FieldLabel>
                <FieldInput id="subject" defaultValue="AT013369/07" />
                <FieldLabel as="span">Attached:</FieldLabel>
                <AttachBox>
                    <WordIcon />
                    <a href="#attachment">ATL-3294.docx (578 KB)</a>
                </AttachBox>
            </Envelope>

            <Message>
                <Letter role="textbox" aria-label="Message" aria-multiline="true">
                    <p>Hi please find attached a new warranty claim for the above van.<Caret /></p>
                    <p>Kind Regards,</p>
                    <Signature>Charleen Sibley</Signature>
                    <p>
                        Charleen Sibley<br />
                        Warranty &amp; After Sales<br />
                        Customer Care Department
                    </p>
                </Letter>
                <ScrollBar>
                    <ScrollTools>
                        <Icon w={9} h={2}><path d="M0 0h9v2H0z" fill="#7c8088" /></Icon>
                        <Icon w={12}>
                            <path d="M1.500 2.500h10v8h-10z" fill="#f4f6f9" stroke="#6d7480" />
                            <circle cx="3.500" cy="3" r="2" fill="#fff" stroke="#555c68" />
                            <circle cx="8" cy="9.500" r="2" fill="#fff" stroke="#555c68" />
                            <path d="M5 4l3 4" stroke="#555c68" />
                        </Icon>
                    </ScrollTools>
                    <ScrollButton aria-label="Scroll up"><Arrow up w={9} color="#35415f" /></ScrollButton>
                    <ScrollTrack>
                        <ScrollThumb>
                            <Icon w={8} h={7}><path d="M0 .5h8M0 2.500h8M0 4.500h8M0 6.500h8" stroke="#8a8d92" /></Icon>
                        </ScrollThumb>
                    </ScrollTrack>
                    <ScrollButton aria-label="Scroll down"><Arrow w={9} color="#35415f" /></ScrollButton>
                </ScrollBar>
            </Message>

            <People>
                <Splitter />
                <PeopleRow>
                    <HelpIcon sign="i" />
                    <span>See more about: warranty@atlaslh.co.uk.</span>
                    <PeopleEnd>
                        <PersonIcon />
                        <ToolButton $width={12} aria-label="Expand people pane"><Chevron color="#222" /></ToolButton>
                    </PeopleEnd>
                </PeopleRow>
            </People>

            <Taskbar>
                <Streaks viewBox="0 0 1920 39" preserveAspectRatio="none" aria-hidden="true">
                    <path d="M130 39L190 0h60L160 39z" fill="#7cc8ea" opacity=".25" />
                    <path d="M620 0h20l40 39h-45z" fill="#7cc8ea" opacity=".2" />
                    <path d="M690 39q90-20 130-39h20q-50 22-130 39z" fill="#8fd0f2" opacity=".3" />
                    <path d="M960 0h80l20 39h-80z" fill="#6cb0e4" opacity=".25" />
                    <path d="M1298 0h34q32 16 54 39h-26q-26-26-62-39z" fill="#8fc0ee" opacity=".5" />
                    <path d="M1304 0h22q32 16 54 39h-16q-26-26-60-39z" fill="#b9dcfa" opacity=".85" />
                </Streaks>
                <TaskButton $width={54} $after={5} aria-label="Start"><StartIcon /></TaskButton>
                <TaskButton $width={60} $open aria-label="Windows Explorer"><FolderIcon /></TaskButton>
                <TaskButton $width={62} aria-label="Internet Explorer"><ExplorerIcon /></TaskButton>
                <TaskButton $width={62} aria-label="Media Player"><MediaIcon /></TaskButton>
                <TaskButton $width={64} aria-label="Chrome"><ChromeIcon /></TaskButton>
                <TaskButton $width={60} $after={2} $open aria-label="Firefox"><FirefoxIcon /></TaskButton>
                <TaskButton $width={52} $open $active aria-label="Outlook"><OutlookIcon /></TaskButton>
                <StackEdge />
                <StackEdge $after={2} />
                <TaskButton $width={60} $open aria-label="Warranty system"><GridIcon /></TaskButton>
                <Tray>
                    <ToolButton aria-label="Show hidden icons"><Arrow up w={8} color="#fff" /></ToolButton>
                    <ToolButton aria-label="Action Center">
                        <Icon w={16}><path d="M1 1h1.500v15H1zM3 2c3-1 4 0 6 1v6c-2-1-3-1-6 0zM10 4h5c0 3-1 5-5 6z" fill="#fff" /></Icon>
                    </ToolButton>
                    <ToolButton aria-label="Network">
                        <Icon w={16}>
                            <path d="M4.500 3.500h11v8h-11zM7 14.500h7M10 12v2" fill="none" stroke="#fff" strokeWidth="1.300" />
                            <path d="M0 2h6v4H4v8H2V6H0zM1 0h1v3H1zM4 0h1v3H4z" fill="#fff" />
                        </Icon>
                    </ToolButton>
                    <ToolButton aria-label="Volume">
                        <Icon w={16}>
                            <path d="M1 5h3l4-4v14l-4-4H1z" fill="#fff" />
                            <path d="M10 5q2 3 0 6M12 3.500q3 4.500 0 9M14 2q4 6 0 12" fill="none" stroke="#dbe8f5" />
                        </Icon>
                    </ToolButton>
                    <Clock>12:23<br />09/08/2016</Clock>
                    <ShowDesktop aria-label="Show desktop" />
                </Tray>
            </Taskbar>
        </Page>
    )
}

export default App
